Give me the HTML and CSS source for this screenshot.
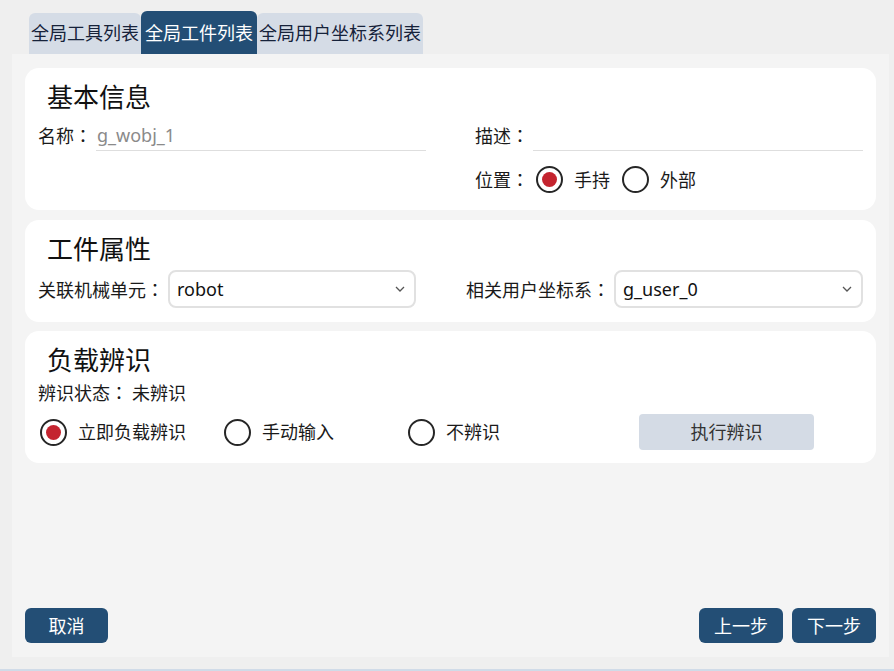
FILE: index.html
```html
<!DOCTYPE html>
<html lang="zh-CN">
<head>
<meta charset="utf-8">
<title>全局工件列表</title>
<link rel="stylesheet" href="styles.css">
</head>
<body>
<div class="app">
  <div class="tabs">
    <div class="tab">全局工具列表</div>
    <div class="tab active">全局工件列表</div>
    <div class="tab">全局用户坐标系列表</div>
  </div>
  <div class="panel">
    <section class="card card-basic">
      <h2 class="card-title">基本信息</h2>
      <div class="grid-basic">
        <div class="field">
          <span class="label">名称<span class="colon" lang="ja">：</span></span>
          <div class="line-input muted">g_wobj_1</div>
        </div>
        <div class="field">
          <span class="label">描述<span class="colon" lang="ja">：</span></span>
          <div class="line-input"></div>
        </div>
        <div></div>
        <div class="field radios">
          <span class="label pos-label">位置<span class="colon" lang="ja">：</span></span>
          <span class="radio-item"><span class="radio checked"></span>手持</span>
          <span class="radio-item"><span class="radio"></span>外部</span>
        </div>
      </div>
    </section>

    <section class="card card-attr">
      <h2 class="card-title">工件属性</h2>
      <div class="grid-attr">
        <div class="field">
          <span class="label">关联机械单元<span class="colon" lang="ja">：</span></span>
          <div class="select"><span class="select-text">robot</span>
            <svg class="chev" width="10" height="6" viewBox="0 0 10 6"><polyline points="1,1 5,5 9,1" fill="none" stroke="#555" stroke-width="1.3"/></svg>
          </div>
        </div>
        <div class="field">
          <span class="label">相关用户坐标系<span class="colon" lang="ja">：</span></span>
          <div class="select"><span class="select-text">g_user_0</span>
            <svg class="chev" width="10" height="6" viewBox="0 0 10 6"><polyline points="1,1 5,5 9,1" fill="none" stroke="#555" stroke-width="1.3"/></svg>
          </div>
        </div>
      </div>
    </section>

    <section class="card card-load">
      <h2 class="card-title">负载辨识</h2>
      <div class="status">辨识状态<span class="colon" lang="ja">：</span><span class="status-val">未辨识</span></div>
      <div class="load-row">
        <span class="radio-item wide"><span class="radio checked"></span>立即负载辨识</span>
        <span class="radio-item wide"><span class="radio"></span>手动输入</span>
        <span class="radio-item wide"><span class="radio"></span>不辨识</span>
        <button class="btn-light">执行辨识</button>
      </div>
    </section>

    <div class="footer">
      <button class="btn-dark">取消</button>
      <div class="footer-right">
        <button class="btn-dark">上一步</button>
        <button class="btn-dark">下一步</button>
      </div>
    </div>
  </div>
  <div class="bottom-line"></div>
</div>
</body>
</html>
```
FILE: styles.css
```css
* { box-sizing: border-box; }
html, body {
  margin: 0;
  padding: 0;
  background: #efefef;
}
body {
  font-family: "Noto Sans", "Noto Sans CJK SC", sans-serif;
  font-size: 18px;
  color: #1a1a1a;
  width: 894px;
  height: 671px;
  overflow: hidden;
}
.app {
  height: 671px;
  display: flex;
  flex-direction: column;
}
.tabs {
  height: 54px;
  display: flex;
  align-items: flex-end;
  padding-left: 29px;
}
.tab {
  background: #d5dce6;
  color: #16223a;
  font-size: 18px;
  line-height: 24px;
  padding: 8px 2px 9px;
  border-radius: 6px 6px 0 0;
  white-space: nowrap;
}
.tab.active {
  background: #234e75;
  color: #fff;
  padding: 10px 4px 9px;
}
.panel {
  height: 603px;
  margin: 0 5px 0 12px;
  background: #f4f4f4;
  padding: 14px 13px 14px 13px;
  display: flex;
  flex-direction: column;
}
.card {
  background: #fff;
  border-radius: 14px;
  padding: 13px 13px 0;
}
.card-basic { padding-bottom: 17px; }
.card-attr { padding-bottom: 14px; margin-top: 10px; }
.card-load { padding-bottom: 13px; margin-top: 9px; }
.card-title {
  margin: 0 0 0 9px;
  font-size: 26px;
  line-height: 32px;
  font-weight: 400;
  color: #111;
}
.colon {
  font-family: "Noto Sans CJK JP", "Noto Sans CJK TC", sans-serif;
}
.label {
  white-space: nowrap;
  line-height: 24px;
  margin-right: 4px;
  color: #1a1a1a;
}
.field {
  display: flex;
  align-items: center;
}
.grid-basic {
  margin-top: 7px;
  display: grid;
  grid-template-columns: 388px 388px;
  column-gap: 49px;
  row-gap: 15px;
}
.line-input {
  flex: 1;
  height: 31px;
  line-height: 30px;
  border-bottom: 1px solid #dedede;
  padding-left: 1px;
}
.muted { color: #8a8a8a; }
.radios { height: 27px; }
.pos-label { margin-right: 7px; }
.radio-item {
  display: inline-flex;
  align-items: center;
  gap: 11px;
  margin-right: 12px;
  line-height: 24px;
  white-space: nowrap;
}
.radio {
  width: 27px;
  height: 27px;
  border: 2.5px solid #262626;
  border-radius: 50%;
  display: inline-flex;
  align-items: center;
  justify-content: center;
  flex: none;
}
.radio.checked::after {
  content: "";
  width: 15px;
  height: 15px;
  border-radius: 50%;
  background: #c4242f;
}
.grid-attr {
  margin-top: 5px;
  display: grid;
  grid-template-columns: 378px 1fr;
  column-gap: 50px;
}
.select {
  flex: 1;
  height: 38px;
  border: 2px solid #e1e1e1;
  border-radius: 8px;
  display: flex;
  align-items: center;
  justify-content: space-between;
  padding: 0 9px 0 7px;
}
.select-text {
  font-size: 18px;
  line-height: 24px;
  color: #111;
}
.chev { display: block; }
.status {
  margin-top: 4px;
  line-height: 24px;
}
.status-val { margin-left: 4px; }
.load-row {
  margin-top: 9px;
  height: 36px;
  display: flex;
  align-items: center;
  padding-left: 2px;
}
.radio-item.wide {
  width: 184px;
  margin-right: 0;
}
.btn-light {
  margin-left: 47px;
  width: 175px;
  height: 36px;
  border: none;
  border-radius: 4px;
  background: #d4dbe5;
  color: #333;
  font-family: inherit;
  font-size: 18px;
  line-height: 24px;
  padding: 0;
}
.footer {
  margin-top: auto;
  display: flex;
  justify-content: space-between;
  align-items: center;
}
.footer-right {
  display: flex;
  gap: 9px;
}
.btn-dark {
  width: 84px;
  height: 35px;
  border: none;
  border-radius: 6px;
  background: #234e75;
  color: #fff;
  font-family: inherit;
  font-size: 18px;
  line-height: 24px;
  padding: 0;
}
.footer > .btn-dark { width: 83px; }
.bottom-line {
  margin-top: auto;
  height: 2px;
  background: #d0dbe8;
}
```
